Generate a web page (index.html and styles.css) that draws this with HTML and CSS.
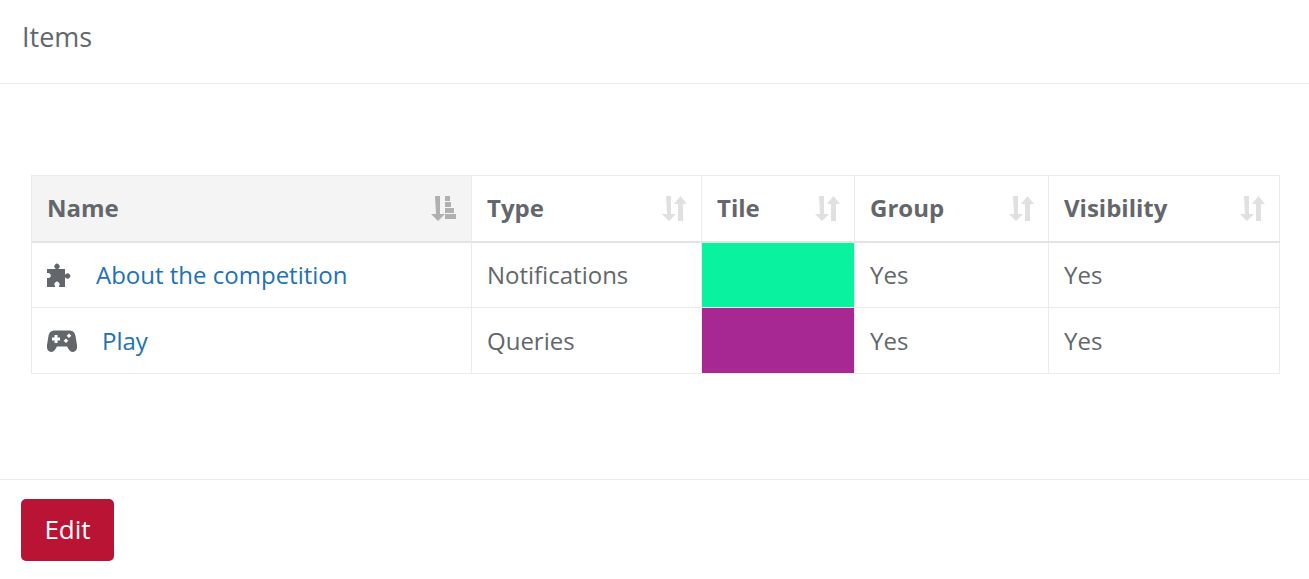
FILE: index.html
```html
<!DOCTYPE html>
<html lang="en">
<head>
<meta charset="utf-8">
<title>Items</title>
<link rel="stylesheet" href="styles.css">
</head>
<body>
<svg class="defs" width="0" height="0" aria-hidden="true">
  <symbol id="sort" viewBox="0 0 25 25">
    <path d="M4 0h5v18h5l-7 7-7-7h5z"/>
    <path d="M18.500 0l6.500 8h-4v17h-5V8h-4z"/>
  </symbol>
</svg>
<header class="top"><h1>Items</h1></header>
<main class="body">
  <table class="grid">
    <colgroup><col class="c1"><col class="c2"><col class="c3"><col class="c4"><col class="c5"></colgroup>
    <thead>
      <tr>
        <th class="active"><div class="th"><span>Name</span>
          <svg class="si dark" viewBox="0 0 25 25"><path d="M4 0h5v18h5l-7 7-7-7h5z"/><path d="M14 0h5v5h-5zM14 6h6v5h-6zM14 12h9v5h-9zM14 18h11v5H14z"/></svg>
        </div></th>
        <th><div class="th"><span>Type</span><svg class="si"><use href="#sort"/></svg></div></th>
        <th><div class="th"><span>Tile</span><svg class="si"><use href="#sort"/></svg></div></th>
        <th><div class="th"><span>Group</span><svg class="si"><use href="#sort"/></svg></div></th>
        <th><div class="th"><span>Visibility</span><svg class="si"><use href="#sort"/></svg></div></th>
      </tr>
    </thead>
    <tbody>
      <tr class="r1">
        <td><div class="name">
          <svg class="puzzle" viewBox="0 0 24 24"><path d="M0 6H8.500V5.500a2.600 2.600 0 1 1 3 0V6H18V11.500h.5a2.600 2.600 0 1 1 0 3H18V24H12V23a2.600 2.600 0 1 0-4 0v1H0V15H.5a2.600 2.600 0 1 0 0-5H0z"/></svg>
          <a href="#">About the competition</a></div></td>
        <td>Notifications</td>
        <td class="tile green"></td>
        <td>Yes</td>
        <td>Yes</td>
      </tr>
      <tr class="r2">
        <td><div class="name">
          <svg class="pad" viewBox="0 0 30 22"><path fill-rule="evenodd" d="M8 .5H22c4 0 6 2 6.600 6L30 15c.5 4-1 7-4 7-2.500 0-3.500-1.500-4.500-3L20 16.500H10L8.500 19c-1 1.500-2 3-4.500 3-3 0-4.500-3-4-7L1.400 6.500C2 2.500 4 .5 8 .5zM7.500 5v2.500H5v3h2.500V13h3v-2.500H13v-3h-2.500V5zM22 3.500l-2.300 2.300 2.300 2.300 2.300-2.300zM19 8.500l-2.300 2.300L19 13.100l2.300-2.300z"/></svg>
          <a class="play" href="#">Play</a></div></td>
        <td>Queries</td>
        <td class="tile purple"></td>
        <td>Yes</td>
        <td>Yes</td>
      </tr>
    </tbody>
  </table>
</main>
<footer class="foot"><button class="edit" type="button">Edit</button></footer>
</body>
</html>
```
FILE: styles.css
```css
* { box-sizing: border-box; }
html, body { margin: 0; padding: 0; }
body {
  width: 1309px;
  height: 579px;
  overflow: hidden;
  background: #fff;
  color: #63676b;
  font-family: "Open Sans", sans-serif;
  font-size: 24px;
}
.defs { position: absolute; }
.top {
  height: 84px;
  padding: 21px 22px 0;
  border-bottom: 1px solid #ebebeb;
}
.top h1 {
  margin: 0;
  font-size: 27px;
  font-weight: 400;
  line-height: 32px;
  color: #63676b;
}
.body {
  height: 395px;
  padding: 91px 30px 0 31px;
}
.grid {
  width: 1248px;
  table-layout: fixed;
  border-collapse: collapse;
}
.c1 { width: 440px; }
.c2 { width: 230px; }
.c3 { width: 153px; }
.c4 { width: 194px; }
.c5 { width: 231px; }
th, td {
  border: 1px solid #ebebeb;
  padding: 0 15px;
  font-weight: 400;
  text-align: left;
  line-height: 30px;
}
th {
  height: 66px;
  border-bottom: 2px solid #e4e4e4;
  font-weight: 700;
}
th.active { background: #f4f4f4; }
.r1 td, .r2 td { height: 66px; }
.th {
  display: flex;
  justify-content: space-between;
  align-items: center;
}
.si {
  width: 25px;
  height: 25px;
  margin-right: -1px;
  fill: #e0e0e0;
}
.si.dark { fill: #b0b0b0; margin-right: 0; }
.name { display: flex; align-items: center; }
.puzzle { width: 24px; height: 24px; fill: #63676b; margin-right: 25px; }
.pad { width: 30px; height: 22px; fill: #63676b; margin-right: 25px; }
a { color: #2271b3; text-decoration: none; }
td.tile { padding: 0; }
.green { background: #08f29f; }
.purple { background: #a72893; }
.foot {
  border-top: 1px solid #ebebeb;
  padding: 19px 21px 0;
}
.edit {
  width: 93px;
  height: 62px;
  border: 0;
  border-radius: 5px;
  background: #b91433;
  color: #fff;
  font: 400 26px/34px "Open Sans", sans-serif;
  padding: 0 0 2px;
}
```
